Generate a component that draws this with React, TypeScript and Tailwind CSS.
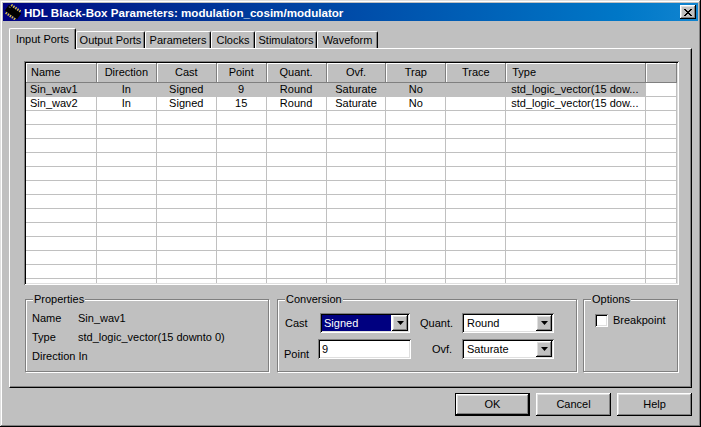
import React from 'react';

const raised =
  'shadow-[inset_-1px_-1px_0_#000,inset_1px_1px_0_#fff,inset_-2px_-2px_0_#808080,inset_2px_2px_0_#dfdfdf]';
const sunken =
  'shadow-[inset_1px_1px_0_#808080,inset_-1px_-1px_0_#fff,inset_2px_2px_0_#000,inset_-2px_-2px_0_#dfdfdf]';

const columns = [
  { label: 'Name', w: 'w-[71px]', left: true },
  { label: 'Direction', w: 'w-[60px]' },
  { label: 'Cast', w: 'w-[60px]' },
  { label: 'Point', w: 'w-[50px]' },
  { label: 'Quant.', w: 'w-[60px]' },
  { label: 'Ovf.', w: 'w-[60px]' },
  { label: 'Trap', w: 'w-[60px]' },
  { label: 'Trace', w: 'w-[60px]' },
  { label: 'Type', w: 'w-[140px]', left: true },
  { label: '', w: 'w-[31px]' },
];

const rows = [
  ['Sin_wav1', 'In', 'Signed', '9', 'Round', 'Saturate', 'No', '', 'std_logic_vector(15 dow...', ''],
  ['Sin_wav2', 'In', 'Signed', '15', 'Round', 'Saturate', 'No', '', 'std_logic_vector(15 dow...', ''],
];

const tabs = [
  { label: 'Input Ports', w: 'w-[67px]', active: true },
  { label: 'Output Ports', w: 'w-[69px]' },
  { label: 'Parameters', w: 'w-[66px]' },
  { label: 'Clocks', w: 'w-[44px]' },
  { label: 'Stimulators', w: 'w-[62px]' },
  { label: 'Waveform', w: 'w-[61px]' },
];

function ChipIcon() {
  return (
    <svg width="16" height="16" viewBox="0 0 16 16">
      <g transform="rotate(35 8 8)">
        {[2.5, 5, 7.5, 10, 12.5].map((x) => (
          <g key={x}>
            <rect x={x} y="2" width="1.4" height="3.5" fill="#d8c040" />
            <rect x={x} y="10.5" width="1.4" height="3.5" fill="#d8c040" />
          </g>
        ))}
        <rect x="0.5" y="4.5" width="15" height="7" fill="#000" />
        <rect x="1.5" y="5.5" width="2" height="1" fill="#707070" />
      </g>
    </svg>
  );
}

function Arrow() {
  return (
    <svg width="7" height="4" viewBox="0 0 7 4">
      <path d="M0 0H7L3.5 4Z" fill="#000" />
    </svg>
  );
}

function Combo({ value, w, selected }: { value: string; w: string; selected?: boolean }) {
  return (
    <div className={`flex h-[20px] ${w} bg-white p-[2px] ${sunken}`}>
      <div
        className={`flex-1 flex items-center pl-[2px] mr-[1px] ${selected ? 'bg-[#000080] text-white' : 'pl-[3px]'}`}
      >
        {value}
      </div>
      <div className={`w-[16px] h-full bg-[#c0c0c0] flex items-center justify-center ${raised}`}>
        <Arrow />
      </div>
    </div>
  );
}

function GroupBox({ title, w, children }: { title: string; w: string; children?: React.ReactNode }) {
  return (
    <div
      className={`relative ${w} h-[73px] border border-[#808080] shadow-[inset_1px_1px_0_#fff,1px_1px_0_#fff]`}
    >
      <span className="absolute -top-[7px] left-[7px] bg-[#c0c0c0] px-[1px] leading-[13px]">{title}</span>
      {children}
    </div>
  );
}

function Button({ label, def }: { label: string; def?: boolean }) {
  return (
    <div className={`w-[75px] h-[23px] ${def ? 'border border-black' : ''}`}>
      <div className={`w-full h-full flex items-center justify-center ${raised}`}>{label}</div>
    </div>
  );
}

export default function App() {
  const empty = Array.from({ length: 14 }, () => Array(10).fill(''));
  const allRows = [...rows, ...empty];

  return (
    <div
      className={`w-[701px] h-[427px] bg-[#c0c0c0] p-[3px] flex flex-col text-[11px] leading-[13px] text-black font-['Liberation_Sans',Arial,sans-serif] shadow-[inset_-1px_-1px_0_#000,inset_1px_1px_0_#dfdfdf,inset_-2px_-2px_0_#808080,inset_2px_2px_0_#fff]`}
    >
      {/* title bar */}
      <div className="h-[18px] flex items-center bg-gradient-to-r from-[#000080] to-[#1084d0] pl-[2px] pr-[2px]">
        <ChipIcon />
        <span className="ml-[3px] text-white font-bold text-[11.6px]">
          HDL Black-Box Parameters: modulation_cosim/modulator
        </span>
        <div className={`ml-auto w-[16px] h-[14px] bg-[#c0c0c0] flex items-center justify-center ${raised}`}>
          <svg width="8" height="7" viewBox="0 0 8 7" shapeRendering="crispEdges">
            <path d="M0 0h2v1h-2zM6 0h2v1h-2zM1 1h2v1h-2zM5 1h2v1h-2zM2 2h4v1h-4zM3 3h2v1h-2zM2 4h4v1h-4zM1 5h2v1h-2zM5 5h2v1h-2zM0 6h2v1h-2zM6 6h2v1h-2z" fill="#000" />
          </svg>
        </div>
      </div>

      {/* tabs */}
      <div className="mt-[7px] ml-[6px] h-[20px] flex items-end">
        {tabs.map((t) =>
          t.active ? (
            <div
              key={t.label}
              className={`relative z-10 -mb-px ${t.w} h-[21px] bg-[#c0c0c0] flex items-center justify-center border-l border-t border-white border-r border-r-black rounded-t-[2px] shadow-[inset_-1px_0_0_#808080]`}
            >
              {t.label}
            </div>
          ) : (
            <div
              key={t.label}
              className={`${t.w} h-[17px] pt-[1px] flex items-center justify-center border-l border-t border-white border-r border-r-black rounded-t-[2px] shadow-[inset_-1px_0_0_#808080]`}
            >
              {t.label}
            </div>
          ),
        )}
      </div>

      {/* panel */}
      <div className="ml-[6px] w-[683px] h-[340px] border-l border-t border-white border-r border-b border-r-black border-b-black shadow-[inset_-1px_-1px_0_#808080] flex flex-col">
        <div className={`mt-[12px] ml-[14px] w-[655px] h-[224px] p-[2px] bg-white ${sunken}`}>
          <div className="w-full h-full overflow-hidden bg-white">
            <div className="flex h-[20px]">
              {columns.map((c, i) => (
                <div
                  key={i}
                  className={`${c.w} h-full bg-[#c0c0c0] border-r border-b border-[#808080] shadow-[inset_1px_1px_0_#fff] flex items-center ${c.left ? (c.label === 'Name' ? 'pl-[5px]' : 'pl-[6px]') : 'justify-center'}`}
                >
                  {c.label}
                </div>
              ))}
            </div>
            {allRows.map((r, ri) => (
              <div key={ri} className="flex h-[14px]">
                {columns.map((c, ci) => (
                  <div
                    key={ci}
                    className={`${c.w} h-full border-r border-b border-[#c0c0c0] flex items-center whitespace-nowrap overflow-hidden ${ri === 0 && ci < 9 ? 'bg-[#c0c0c0]' : ''} ${c.left ? (ci === 0 ? 'pl-[4px]' : 'pl-[5px]') : 'justify-center'}`}
                  >
                    {r[ci]}
                  </div>
                ))}
              </div>
            ))}
          </div>
        </div>

        <div className="mt-[14px] ml-[15px] flex">
          <GroupBox title="Properties" w="w-[244px]">
            <div className="pt-[9px] pl-[6px]">
              <div className="h-[19px] flex items-center">
                <span className="w-[46px]">Name</span>
                <span>Sin_wav1</span>
              </div>
              <div className="h-[19px] flex items-center">
                <span className="w-[46px]">Type</span>
                <span>std_logic_vector(15 downto 0)</span>
              </div>
              <div className="h-[19px] flex items-center">Direction In</div>
            </div>
          </GroupBox>

          <div className="ml-[8px]">
            <GroupBox title="Conversion" w="w-[300px]">
              <div className="pt-[13px] flex flex-col gap-[6px]">
                <div className="flex items-center h-[20px]">
                  <span className="ml-[7px] w-[35px]">Cast</span>
                  <Combo value="Signed" w="w-[90px]" selected />
                  <span className="ml-[10px] w-[42px]">Quant.</span>
                  <Combo value="Round" w="w-[92px]" />
                </div>
                <div className="flex items-center h-[20px]">
                  <span className="ml-[6px] w-[34px] mt-[10px]">Point</span>
                  <div className={`w-[93px] h-[20px] bg-white p-[2px] pl-[4px] flex items-center ${sunken}`}>9</div>
                  <span className="ml-[21px] w-[30px]">Ovf.</span>
                  <Combo value="Saturate" w="w-[92px]" />
                </div>
              </div>
            </GroupBox>
          </div>

          <div className="ml-[6px]">
            <GroupBox title="Options" w="w-[95px]">
              <div className="pt-[14px] pl-[11px] flex items-center">
                <div className={`w-[13px] h-[13px] bg-white ${sunken}`} />
                <span className="ml-[5px]">Breakpoint</span>
              </div>
            </GroupBox>
          </div>
        </div>
      </div>

      {/* buttons */}
      <div className="mt-[5px] flex justify-end gap-[6px] pr-[6px]">
        <Button label="OK" def />
        <Button label="Cancel" />
        <Button label="Help" />
      </div>
    </div>
  );
}
